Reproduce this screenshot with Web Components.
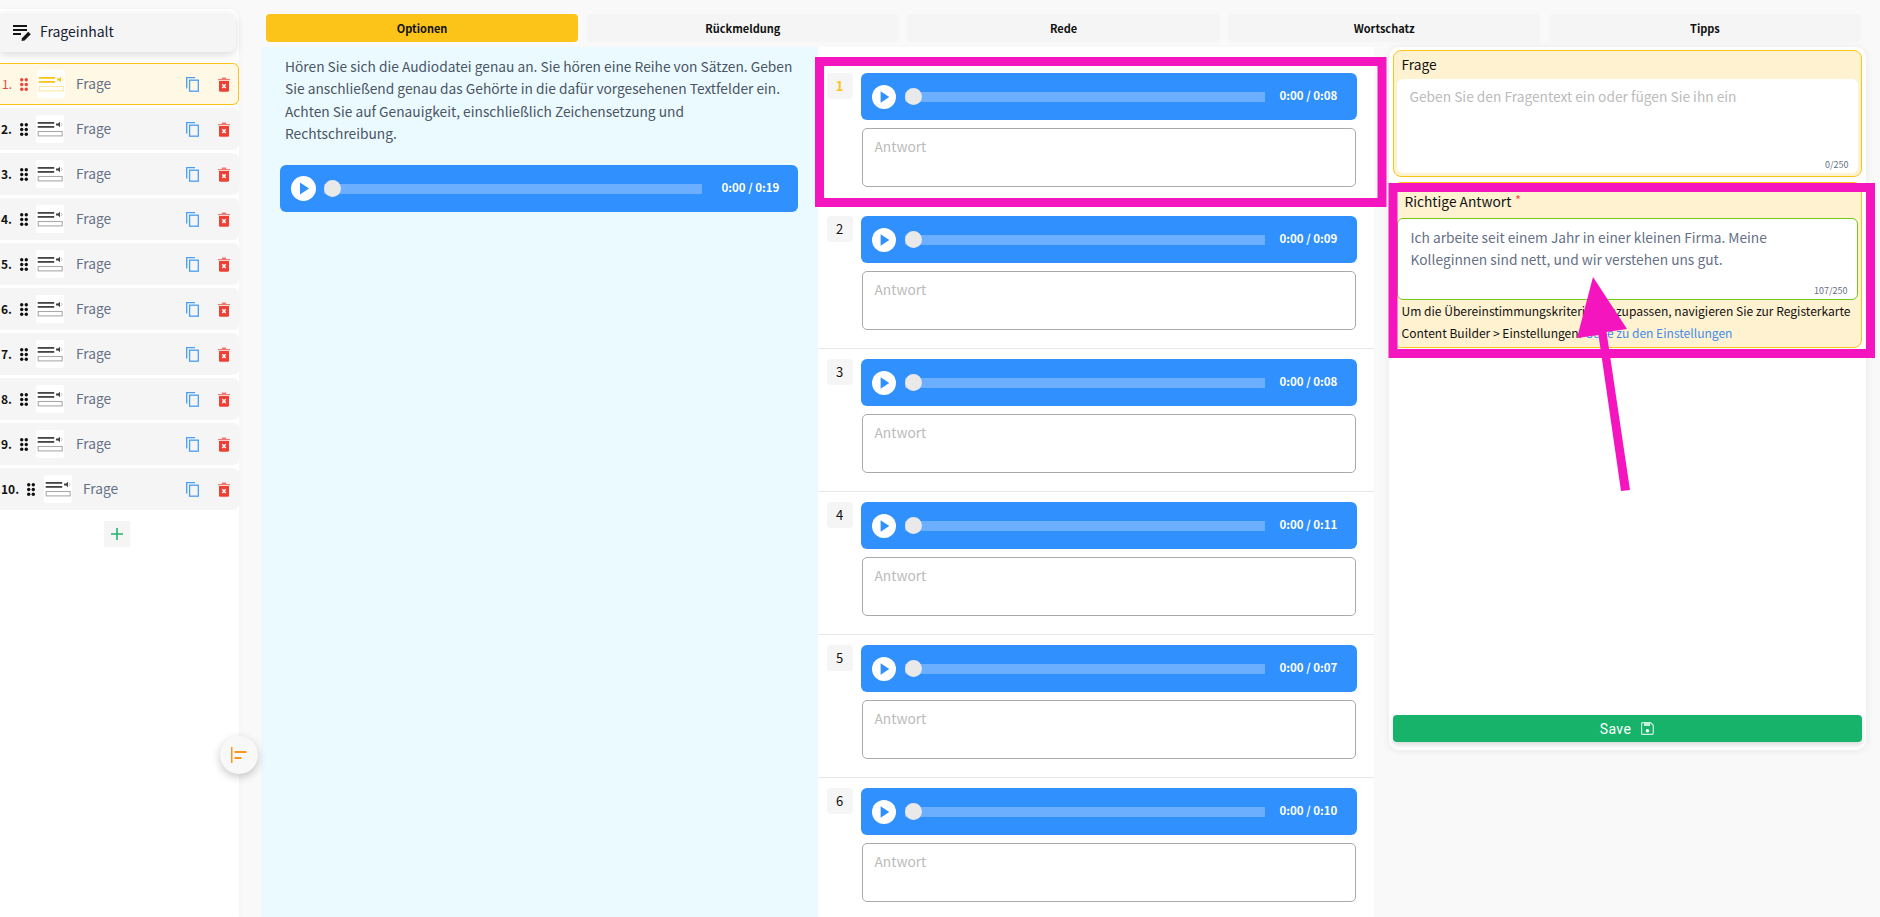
<!DOCTYPE html>
<html lang="de"><head><meta charset="utf-8"><title>Frageinhalt</title>
<style>
html,body{margin:0;height:917px;overflow:hidden;background:#f9f9f9}
body{font-family:"Noto Sans CJK SC","Noto Sans",sans-serif}
</style></head><body>
<qb-app></qb-app>
<script>
const FONT='"Noto Sans CJK SC","Noto Sans",sans-serif';
function def(name,html){
  customElements.define(name,class extends HTMLElement{
    connectedCallback(){
      if(this.shadowRoot)return;
      const r=this.attachShadow({mode:'open'});
      r.innerHTML=typeof html==='function'?html(this):html;
    }
  });
}
const grip=c=>`<svg width="8" height="13" viewBox="0 0 8 13" fill="${c}"><circle cx="1.700" cy="1.800" r="1.700"/><circle cx="6.300" cy="1.800" r="1.700"/><circle cx="1.700" cy="6.500" r="1.700"/><circle cx="6.300" cy="6.500" r="1.700"/><circle cx="1.700" cy="11.200" r="1.700"/><circle cx="6.300" cy="11.200" r="1.700"/></svg>`;
const thumb=(dark,light)=>`<svg width="28" height="28" viewBox="0 0 28 28"><rect width="28" height="28" rx="2" fill="#fff"/><rect x="1.700" y="7" width="16.500" height="1.800" fill="${dark}"/><rect x="1.700" y="11" width="16.500" height="1.800" fill="${dark}"/><path d="M20 8.500h2l2-1.800v5.600l-2-1.800h-2z" fill="${dark}"/><path d="M25 8l1 1.500L25 11" fill="none" stroke="${light}" stroke-width=".7"/><rect x="2.200" y="16.500" width="24" height="4.400" fill="none" stroke="${light}" stroke-width="1.100"/></svg>`;
const copyIco=`<svg width="13" height="15" viewBox="0 0 13 15" fill="none" stroke="#4a9ef5" stroke-width="1.300"><rect x="3.600" y="3.200" width="8.700" height="11"/><path d="M.7 11.500V.7h8.300"/></svg>`;
const trashIco=`<svg width="12" height="15" viewBox="0 0 12 15"><path d="M0 2h12v1.300H0zM3.800.6h4.400V2H3.800z" fill="#f07a70"/><path d="M1 4h10v9.500a1.300 1.300 0 0 1-1.300 1.300H2.300A1.300 1.300 0 0 1 1 13.500z" fill="#ee4035"/><path d="M4.300 7.300l3.400 3.700M7.700 7.300l-3.400 3.700" stroke="#fff" stroke-width="1.400"/></svg>`;

def('qb-row',h=>{const a=h.hasAttribute('active');return `<style>
:host{display:flex;align-items:center;height:42px;box-sizing:border-box;background:${a?'#fff8e5':'#f5f5f5'};border-radius:0 6px 6px 0;padding:0 ${a?8:9}px 0 ${a?2:1}px;${a?'border:1px solid #fcc419;border-left:0;':''}}
.n{font-size:12px;font-weight:${a?400:600};color:${a?'#f0443a':'#111'};line-height:16px;margin-right:8px;min-width:9px}
.g{display:flex;margin-right:8.500px}
.t{display:flex;margin-right:11.500px;width:28px;height:28px}
.l{flex:1;font-size:13.750px;color:#667085;line-height:18px;margin-top:-2px}
.c{display:flex;margin-right:19.500px}.d{display:flex}
</style><span class="n">${h.getAttribute('n')}</span><span class="g">${grip(a?'#f0443a':'#111')}</span><span class="t">${a?thumb('#fcc419','#fde6a4'):thumb('#444','#aaa')}</span><span class="l">Frage</span><span class="c">${copyIco}</span><span class="d">${trashIco}</span>`});

def('qb-sidebar',()=>`<style>
:host{display:block;flex:none;width:239px;height:908px;margin-top:9px;background:#fff;border-radius:0 10px 0 0;box-shadow:0 0 6px rgba(0,0,0,.03)}
.h{display:flex;align-items:center;height:39px;width:236px;margin-top:4px;background:#f5f5f5;border-radius:0 8px 8px 0;box-shadow:0 3px 8px rgba(0,0,0,.14);padding:0 0 3px 13px;box-sizing:border-box;font-size:14px;line-height:20px;color:#172033}
.h svg{margin-right:9px;flex:none;margin-top:3px}
.list{display:flex;flex-direction:column;gap:3px;margin-top:11px}
.add{display:flex;align-items:center;justify-content:center;width:26px;height:26px;margin:11px 0 0 104px;background:#f5f5f5}
</style><div class="h"><svg width="18" height="16" viewBox="0 0 18 16" fill="#151515"><rect y="0" width="14" height="2"/><rect y="4" width="14" height="2"/><rect y="8" width="8" height="2"/><path d="M9 13.200l6.200-6.400 2.600 2.400-6.200 6.200-3 .6z"/></svg>Frageinhalt</div>
<div class="list"><qb-row n="1." active></qb-row><qb-row n="2."></qb-row><qb-row n="3."></qb-row><qb-row n="4."></qb-row><qb-row n="5."></qb-row><qb-row n="6."></qb-row><qb-row n="7."></qb-row><qb-row n="8."></qb-row><qb-row n="9."></qb-row><qb-row n="10."></qb-row></div>
<div class="add"><svg width="12" height="12" viewBox="0 0 12 12"><path d="M5.200 0h1.600v5.200H12v1.600H6.800V12H5.200V6.800H0V5.200h5.200z" fill="#22b46e"/></svg></div>`);

def('qb-tab',h=>`<style>
:host{display:flex;flex:1;align-items:center;justify-content:center;height:28px;border-radius:4px;background:${h.hasAttribute('active')?'#fcc419':'#f5f5f5'};font-size:11px;font-weight:600;color:#111;line-height:16px}
</style><slot></slot>`);

def('audio-bar',h=>{const left=h.hasAttribute('wide');const ps=left?25:24;return `<style>
:host{display:flex;align-items:center;height:47px;box-sizing:border-box;background:#3090fd;border-radius:6px;padding:0 ${left?18:19}px 0 ${left?10.5:11}px;color:#fff}
.p{flex:none;display:flex;margin-right:${left?8.5:9}px}
.tr{flex:1;height:10px;background:#6caeff;display:flex;align-items:center;margin-right:${left?20:14.5}px}
.th{width:17px;height:17px;border-radius:50%;background:#e9e9e9}
.t{flex:none;font-size:11.500px;font-weight:600;line-height:18px;margin-top:-3px;width:58px;white-space:nowrap}
</style><span class="p"><svg width="${ps}" height="${ps}" viewBox="0 0 25 25"><circle cx="12.500" cy="12.500" r="12.500" fill="#fff"/><path d="M9 6.500l9 6-9 6z" fill="#3090fd"/></svg></span><span class="tr"><span class="th"></span></span><span class="t">0:00 / ${h.getAttribute('d')}</span>`});

def('answer-item',h=>{const a=h.hasAttribute('active');return `<style>
:host{display:grid;grid-template-columns:26px 1fr;column-gap:8px;padding:${a?'26':'10'}px 17px 18px 9px;border-bottom:${a?'1px solid transparent':'1px solid #e6e6e6'}}
.n{width:26px;height:26px;background:#f5f5f5;border-radius:4px;display:flex;align-items:center;justify-content:center;font-size:13px;font-weight:${a?700:400};color:${a?'#fcc419':'#111'};line-height:16px}
.b{display:flex;flex-direction:column;gap:8px;min-width:0}
.a{box-sizing:border-box;height:59px;margin:0 1px;border:1px solid #aaa;border-radius:5px;background:#fff;padding:7px 12px;font-size:13.750px;line-height:20px;color:#bbb}
</style><span class="n">${h.getAttribute('n')}</span><div class="b"><audio-bar d="${h.getAttribute('d')}"></audio-bar><div class="a">Antwort</div></div>`});

def('field-box',h=>`<style>
:host{display:flex;flex-direction:column;box-sizing:border-box;background:#fff2d0;border:1px solid #fcc419;border-radius:8px;padding:0 3px 3px}
.l{font-size:13.750px;line-height:20px;color:#111;padding:${h.getAttribute('pt')}px 0 ${h.getAttribute('pb')}px ${h.getAttribute('lx')}px}
.s{color:#f44;font-size:12px;line-height:0;margin-left:4px;vertical-align:2px}
.f{position:relative;box-sizing:border-box;height:${h.getAttribute('fh')}px;background:#fff;border-radius:6px;padding:6px 13px;font-size:13.750px;line-height:22px;color:#bbb;${h.hasAttribute('ok')?'border:1px solid #72c91e;color:#667085;padding:7px 40px 0 13px;':''}}
.c{position:absolute;right:9px;bottom:1px;font-size:9px;line-height:14px;color:#667085}
</style><div class="l">${h.getAttribute('label')}${h.hasAttribute('req')?'<span class="s">*</span>':''}</div><div class="f"><slot></slot><span class="c">${h.getAttribute('count')}</span></div><slot name="help"></slot>`);

def('help-text',`<style>:host{display:block;font-size:12.050px;line-height:22px;color:#111;padding:0 0 0 5px;white-space:nowrap}a{color:#3f8cf0;text-decoration:none}</style>Um die Übereinstimmungskriterien anzupassen, navigieren Sie zur Registerkarte<br>Content Builder &gt; Einstellungen. <a>Gehe zu den Einstellungen</a>`);

def('save-button',`<style>
:host{display:flex;align-items:center;justify-content:center;gap:10px;height:27px;background:#18b36b;border-radius:4px;box-shadow:0 3px 5px rgba(0,0,0,.14);color:#fff;font:400 14px/18px Roboto,sans-serif;letter-spacing:.4px}
svg{display:block}
</style><slot></slot><svg width="13" height="13" viewBox="0 0 13 13" fill="none"><path d="M1.500.7h8l2.800 2.600v8a1 1 0 0 1-1 1H1.500a.9.9 0 0 1-.9-.9V1.500a.9.9 0 0 1 .9-.8z" stroke="#c6f0da" stroke-width="1.200"/><path d="M3 1h6v3H3z" fill="#c6f0da"/><circle cx="6.500" cy="8.700" r="1.800" fill="#fff"/></svg>`);

def('annotation-layer',`<style>
:host{position:absolute;left:0;top:0;width:1880px;height:917px;pointer-events:none}
svg{display:block}
</style><svg width="1880" height="917" viewBox="0 0 1880 917"><g fill="none" stroke="#f415bf" stroke-width="9"><rect x="819.500" y="61.500" width="562.500" height="141"/><rect x="1393" y="187.500" width="477.500" height="166"/></g><path d="M1593 277L1627 329L1606.500 332L1630 490L1621 491L1598.500 335L1577 338Z" fill="#f415bf"/></svg>`);

def('toggle-fab',`<style>
:host{position:absolute;left:220px;top:736px;width:38px;height:38px;border-radius:50%;background:#f8f8f8;box-shadow:0 3px 8px rgba(0,0,0,.22);display:flex;align-items:center;justify-content:center}
</style><svg width="16" height="16" viewBox="0 0 16 16" fill="#ff9518"><rect x="0" y="0" width="1.500" height="16"/><rect x="3.500" y="4" width="12" height="2"/><rect x="3.500" y="10" width="7" height="2"/></svg>`);

def('qb-app',`<style>
:host{display:flex;position:relative;width:1880px;height:917px;overflow:hidden;background:#f9f9f9;font-family:${FONT}}
.main{flex:1;min-width:0;display:flex;flex-direction:column;padding:14px 19px 0 22px}
.tabs{display:flex;gap:8.500px;margin-left:5px}
.cols{flex:1;display:flex;margin-top:5px;min-height:0}
.intro{flex:none;width:556.500px;box-sizing:border-box;background:#eafaff;padding:8px 20px 0 19px}
.intro p{margin:0 0 20.400px 5px;font-size:13.750px;line-height:22.400px;color:#4b5563}
.mid{flex:none;width:556px;background:#fff;overflow:hidden}
.right{flex:none;width:477px;height:703px;margin-left:15px;background:#fff;border-radius:10px;box-shadow:0 1px 8px rgba(0,0,0,.07);box-sizing:border-box;padding:3px 4px 8px;display:flex;flex-direction:column}
.a1{height:127px}.a2{height:166px;margin-top:5px}
.sp{flex:1}
</style>
<qb-sidebar></qb-sidebar>
<div class="main">
 <div class="tabs"><qb-tab active>Optionen</qb-tab><qb-tab>Rückmeldung</qb-tab><qb-tab>Rede</qb-tab><qb-tab>Wortschatz</qb-tab><qb-tab>Tipps</qb-tab></div>
 <div class="cols">
  <section class="intro"><p>Hören Sie sich die Audiodatei genau an. Sie hören eine Reihe von Sätzen. Geben Sie anschließend genau das Gehörte in die dafür vorgesehenen Textfelder ein. Achten Sie auf Genauigkeit, einschließlich Zeichensetzung und Rechtschreibung.</p><audio-bar d="0:19" wide></audio-bar></section>
  <section class="mid">
   <answer-item n="1" d="0:08" active></answer-item>
   <answer-item n="2" d="0:09"></answer-item>
   <answer-item n="3" d="0:08"></answer-item>
   <answer-item n="4" d="0:11"></answer-item>
   <answer-item n="5" d="0:07"></answer-item>
   <answer-item n="6" d="0:10"></answer-item>
  </section>
  <section class="right">
   <field-box class="a1" label="Frage" pt="3" pb="5" lx="5" count="0/250" fh="94">Geben Sie den Fragentext ein oder fügen Sie ihn ein</field-box>
   <field-box class="a2" label="Richtige Antwort" req lx="8" pt="8" pb="7" ok count="107/250" fh="83">Ich arbeite seit einem Jahr in einer kleinen Firma. Meine Kolleginnen sind nett, und wir verstehen uns gut.<help-text slot="help"></help-text></field-box>
   <div class="sp"></div>
   <save-button>Save</save-button>
  </section>
 </div>
</div>
<toggle-fab></toggle-fab>
<annotation-layer></annotation-layer>`);
</script>
</body></html>
